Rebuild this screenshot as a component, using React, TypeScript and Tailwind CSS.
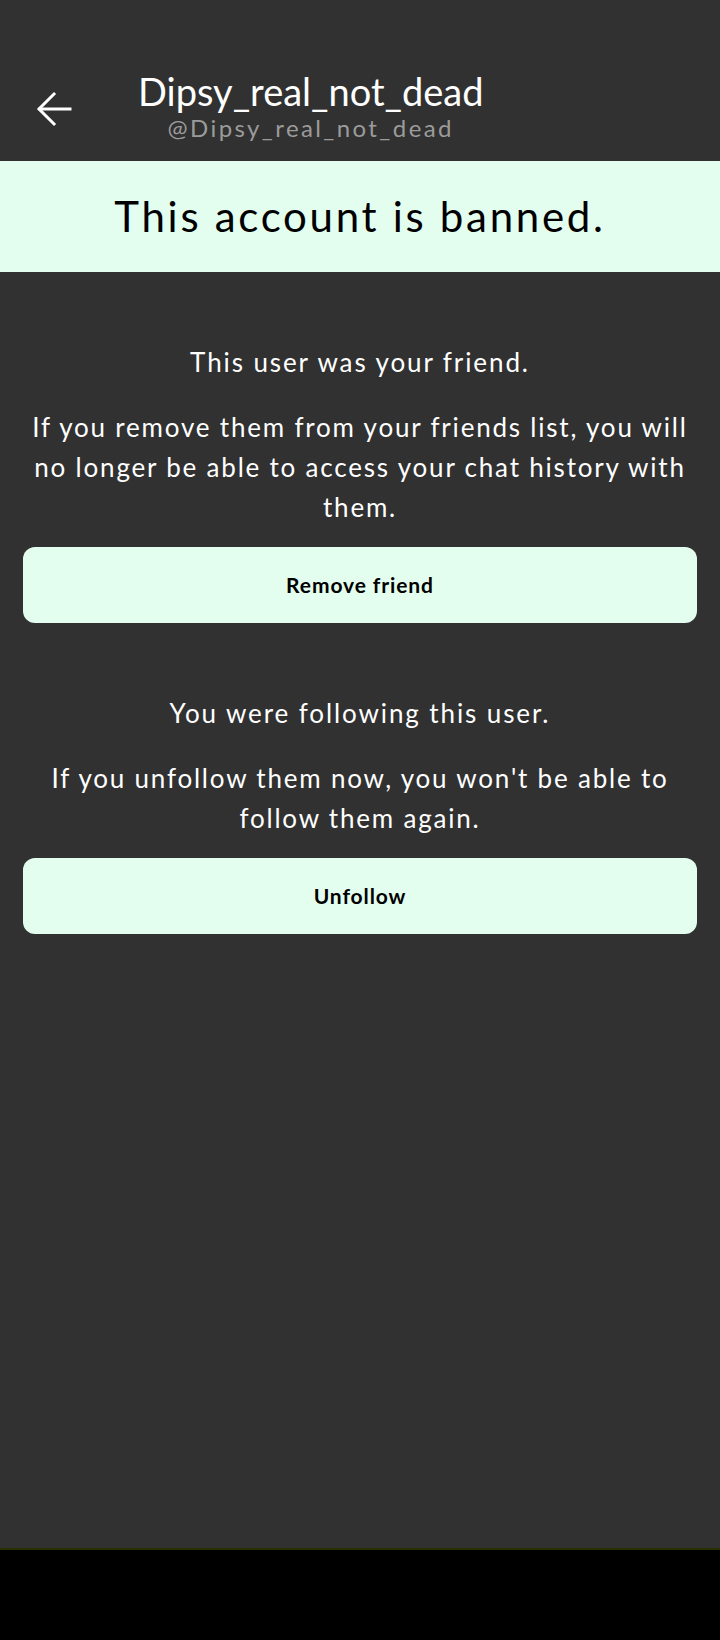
import React from "react";

function BackArrow() {
  return (
    <svg width="48" height="48" viewBox="0 0 24 24" fill="none" stroke="white" strokeWidth="1.5" strokeLinecap="square">
      <path d="M19.5 12H4.5" />
      <path d="M11.5 4.5L4 12l7.5 7.5" />
    </svg>
  );
}

function Section({ title, body, action }: { title: string; body: string; action: string }) {
  return (
    <div className="flex flex-col items-center">
      <p className="text-[26px] leading-[40px] tracking-[1.9px] text-white text-center">{title}</p>
      <p className="mt-[25px] text-[26px] leading-[40px] tracking-[1.8px] text-white text-center">{body}</p>
      <button className="mt-[20px] w-full h-[76px] rounded-[12px] bg-[#e3fdef] text-black text-[21px] tracking-[0.9px] font-bold">
        {action}
      </button>
    </div>
  );
}

export default function App() {
  return (
    <div className="min-h-[1640px] flex flex-col bg-[#313131]" style={{ fontFamily: "Lato, 'Open Sans', sans-serif" }}>
      {/* Header */}
      <div className="h-[161px] flex items-end pb-[18px]">
        <div className="w-[106px] flex justify-center pb-[10px] pl-[3px]">
          <BackArrow />
        </div>
        <div className="flex flex-col items-center ml-[32px]">
          <span className="text-[38px] leading-[44px] text-white">Dipsy_real_not_dead</span>
          <span className="text-[24px] leading-[30px] tracking-[2.4px] text-[#9b9b9b]">@Dipsy_real_not_dead</span>
        </div>
      </div>

      {/* Banned banner */}
      <div className="h-[111px] bg-[#e3fdef] flex items-center justify-center">
        <span className="text-[42px] tracking-[2.7px] text-black">This account is banned.</span>
      </div>

      {/* Body */}
      <div className="flex-1 px-[23px] pt-[70px] flex flex-col gap-[70px]">
        <Section
          title="This user was your friend."
          body="If you remove them from your friends list, you will no longer be able to access your chat history with them."
          action="Remove friend"
        />
        <Section
          title="You were following this user."
          body="If you unfollow them now, you won't be able to follow them again."
          action="Unfollow"
        />
      </div>

      <div className="h-[2px] bg-[#2a2f00]" />
      <div className="h-[90px] bg-black" />
    </div>
  );
}
